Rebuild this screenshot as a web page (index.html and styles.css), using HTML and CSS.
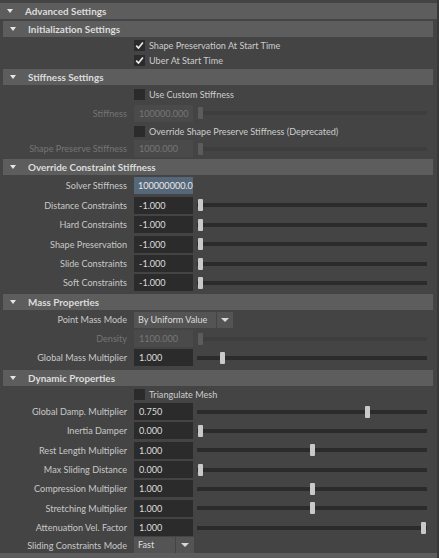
FILE: index.html
```html
<!DOCTYPE html>
<html>
<head>
<meta charset="utf-8">
<link rel="stylesheet" href="styles.css">
</head>
<body>
<div class="page">
  <div class="hdr outer"><span class="tri"></span><span class="ht">Advanced Settings</span></div>

  <div class="sect">
    <div class="hdr inner"><span class="tri"></span><span class="ht">Initialization Settings</span></div>
    <div class="content c-init">
      <div class="row h15"><span class="label"></span><span class="cb"><svg viewBox="0 0 11 11" width="11" height="11"><path d="M2.2 5.6 L4.5 8 L8.9 2.6" fill="none" stroke="#eeeeee" stroke-width="1.6"/></svg></span><span class="cbt">Shape Preservation At Start Time</span></div>
      <div class="row h15"><span class="label"></span><span class="cb"><svg viewBox="0 0 11 11" width="11" height="11"><path d="M2.2 5.6 L4.5 8 L8.9 2.6" fill="none" stroke="#eeeeee" stroke-width="1.6"/></svg></span><span class="cbt">Uber At Start Time</span></div>
    </div>
  </div>

  <div class="sect">
    <div class="hdr inner"><span class="tri"></span><span class="ht">Stiffness Settings</span></div>
    <div class="content c-stiff">
      <div class="row h18"><span class="label"></span><span class="cb"></span><span class="cbt">Use Custom Stiffness</span></div>
      <div class="row h20 dis"><span class="label">Stiffness</span><span class="field">100000.000</span><span class="slider"><span class="track"></span><span class="thumb" style="--v:0"></span></span></div>
      <div class="row h16"><span class="label"></span><span class="cb"></span><span class="cbt">Override Shape Preserve Stiffness (Deprecated)</span></div>
      <div class="row h19 dis"><span class="label">Shape Preserve Stiffness</span><span class="field">1000.000</span><span class="slider"><span class="track"></span><span class="thumb" style="--v:0"></span></span></div>
    </div>
  </div>

  <div class="sect">
    <div class="hdr inner"><span class="tri"></span><span class="ht">Override Constraint Stiffness</span></div>
    <div class="content c-over">
      <div class="row h194"><span class="label">Solver Stiffness</span><span class="field sel">100000000.0</span></div>
      <div class="row h194"><span class="label">Distance Constraints</span><span class="field">-1.000</span><span class="slider"><span class="track"></span><span class="thumb" style="--v:0"></span></span></div>
      <div class="row h194"><span class="label">Hard Constraints</span><span class="field">-1.000</span><span class="slider"><span class="track"></span><span class="thumb" style="--v:0"></span></span></div>
      <div class="row h194"><span class="label">Shape Preservation</span><span class="field">-1.000</span><span class="slider"><span class="track"></span><span class="thumb" style="--v:0"></span></span></div>
      <div class="row h194"><span class="label">Slide Constraints</span><span class="field">-1.000</span><span class="slider"><span class="track"></span><span class="thumb" style="--v:0"></span></span></div>
      <div class="row h194"><span class="label">Soft Constraints</span><span class="field">-1.000</span><span class="slider"><span class="track"></span><span class="thumb" style="--v:0"></span></span></div>
    </div>
  </div>

  <div class="sect">
    <div class="hdr inner"><span class="tri"></span><span class="ht">Mass Properties</span></div>
    <div class="content c-mass">
      <div class="row h19"><span class="label">Point Mass Mode</span><span class="dd wide"><span class="ddt">By Uniform Value</span><span class="dda"><span class="arr"></span></span></span></div>
      <div class="row h19 dis"><span class="label">Density</span><span class="field">1100.000</span><span class="slider"><span class="track"></span><span class="thumb" style="--v:0"></span></span></div>
      <div class="row h19"><span class="label">Global Mass Multiplier</span><span class="field">1.000</span><span class="slider"><span class="track"></span><span class="thumb" style="--v:0.1"></span></span></div>
    </div>
  </div>

  <div class="sect">
    <div class="hdr inner"><span class="tri"></span><span class="ht">Dynamic Properties</span></div>
    <div class="content c-dyn">
      <div class="row h16"><span class="label"></span><span class="cb"></span><span class="cbt">Triangulate Mesh</span></div>
      <div class="row h1933"><span class="label">Global Damp. Multiplier</span><span class="field">0.750</span><span class="slider"><span class="track"></span><span class="thumb" style="--v:0.75"></span></span></div>
      <div class="row h1933"><span class="label">Inertia Damper</span><span class="field">0.000</span><span class="slider"><span class="track"></span><span class="thumb" style="--v:0"></span></span></div>
      <div class="row h1933"><span class="label">Rest Length Multiplier</span><span class="field">1.000</span><span class="slider"><span class="track"></span><span class="thumb" style="--v:0.5"></span></span></div>
      <div class="row h1933"><span class="label">Max Sliding Distance</span><span class="field">0.000</span><span class="slider"><span class="track"></span><span class="thumb" style="--v:0"></span></span></div>
      <div class="row h1933"><span class="label">Compression Multiplier</span><span class="field">1.000</span><span class="slider"><span class="track"></span><span class="thumb" style="--v:0.5"></span></span></div>
      <div class="row h1933"><span class="label">Stretching Multiplier</span><span class="field">1.000</span><span class="slider"><span class="track"></span><span class="thumb" style="--v:0.5"></span></span></div>
      <div class="row h1933"><span class="label">Attenuation Vel. Factor</span><span class="field">1.000</span><span class="slider"><span class="track"></span><span class="thumb" style="--v:1"></span></span></div>
      <div class="row h16"><span class="label">Sliding Constraints Mode</span><span class="dd narrow"><span class="ddt">Fast</span><span class="dda"><span class="arr"></span></span></span></div>
    </div>
  </div>

  <div class="hdr outer"><span class="tri"></span><span class="ht"></span></div>
</div>
</body>
</html>
```
FILE: styles.css
```css
html, body {
  margin: 0;
  padding: 0;
}
body {
  background: #444444;
  font-family: Lato, "Open Sans", sans-serif;
  font-size: 9.1px;
  color: #c8c8c8;
  width: 439px;
  height: 558px;
  overflow: hidden;
}
.page {
  width: 439px;
  height: 558px;
  box-sizing: border-box;
  padding-top: 3px;
  border-right: 2px solid #383838;
  overflow: hidden;
}
.hdr {
  height: 16px;
  background: #5d5d5d;
  display: flex;
  align-items: center;
  font-weight: bold;
  font-size: 9.9px;
  color: #dcdcdc;
  box-sizing: border-box;
}
.hdr.outer {
  padding-left: 7px;
}
.hdr.inner {
  padding-left: 7px;
}
.tri {
  width: 0;
  height: 0;
  border-left: 3.5px solid transparent;
  border-right: 3.5px solid transparent;
  border-top: 4px solid #e6e6e6;
  margin-right: 12px;
  flex: none;
}
.sect {
  margin: 2px 4px 0 3px;
}
.sect + .sect {
  margin-top: 0;
}
.content {
  box-sizing: border-box;
}
.c-init { height: 32px; padding-top: 1px; }
.c-stiff { height: 74px; }
.c-over { height: 119px; padding-top: 1.3px; }
.c-mass { height: 60px; }
.c-dyn { height: 167px; }

.row {
  display: flex;
  align-items: center;
}
.h15 { height: 15px; }
.h16 { height: 16px; }
.h18 { height: 18px; }
.h19 { height: 19px; }
.h20 { height: 20px; }
.h194 { height: 19.4px; }
.h1933 { height: 19.33px; }

.label {
  width: 124px;
  flex: none;
  text-align: right;
  margin-right: 7px;
  white-space: nowrap;
}
.dis .label { color: #747474; }

.cb {
  width: 11px;
  height: 11px;
  background: #2b2b2b;
  flex: none;
  display: flex;
}
.cbt {
  margin-left: 4px;
  color: #cccccc;
  white-space: nowrap;
}

.field {
  width: 59px;
  height: 17px;
  flex: none;
  background: #2b2b2b;
  color: #dddddd;
  box-sizing: border-box;
  padding-left: 5px;
  line-height: 17px;
  overflow: hidden;
  white-space: nowrap;
}
.field.sel {
  background: #56677a;
  color: #e8e8e8;
  padding-left: 4px;
}
.dis .field {
  background: #4a4a4a;
  color: #767676;
}

.slider {
  position: relative;
  margin-left: 4px;
  width: 230px;
  height: 12px;
  flex: none;
}
.track {
  position: absolute;
  left: 0;
  right: 0;
  top: 4px;
  height: 4px;
  background: #2b2b2b;
}
.dis .track {
  left: 3px;
  background: #3e3e3e;
}
.thumb {
  position: absolute;
  top: 0;
  width: 5px;
  height: 12px;
  background: #c9c9c9;
  border-radius: 1px;
  left: calc(1px + var(--v) * 223px);
}
.dis .thumb {
  background: #5c5c5c;
}

.dd {
  display: flex;
  height: 16px;
  flex: none;
}
.ddt {
  background: #545454;
  color: #dddddd;
  padding-left: 4px;
  line-height: 16px;
  box-sizing: border-box;
  white-space: nowrap;
}
.dda {
  background: #545454;
  margin-left: 1px;
  display: flex;
  align-items: center;
  justify-content: center;
}
.wide .ddt { width: 82px; }
.wide .dda { width: 16px; }
.narrow .ddt { width: 41px; }
.narrow .dda { width: 18px; }
.arr {
  width: 0;
  height: 0;
  border-left: 4px solid transparent;
  border-right: 4px solid transparent;
  border-top: 4px solid #d8d8d8;
}
```
